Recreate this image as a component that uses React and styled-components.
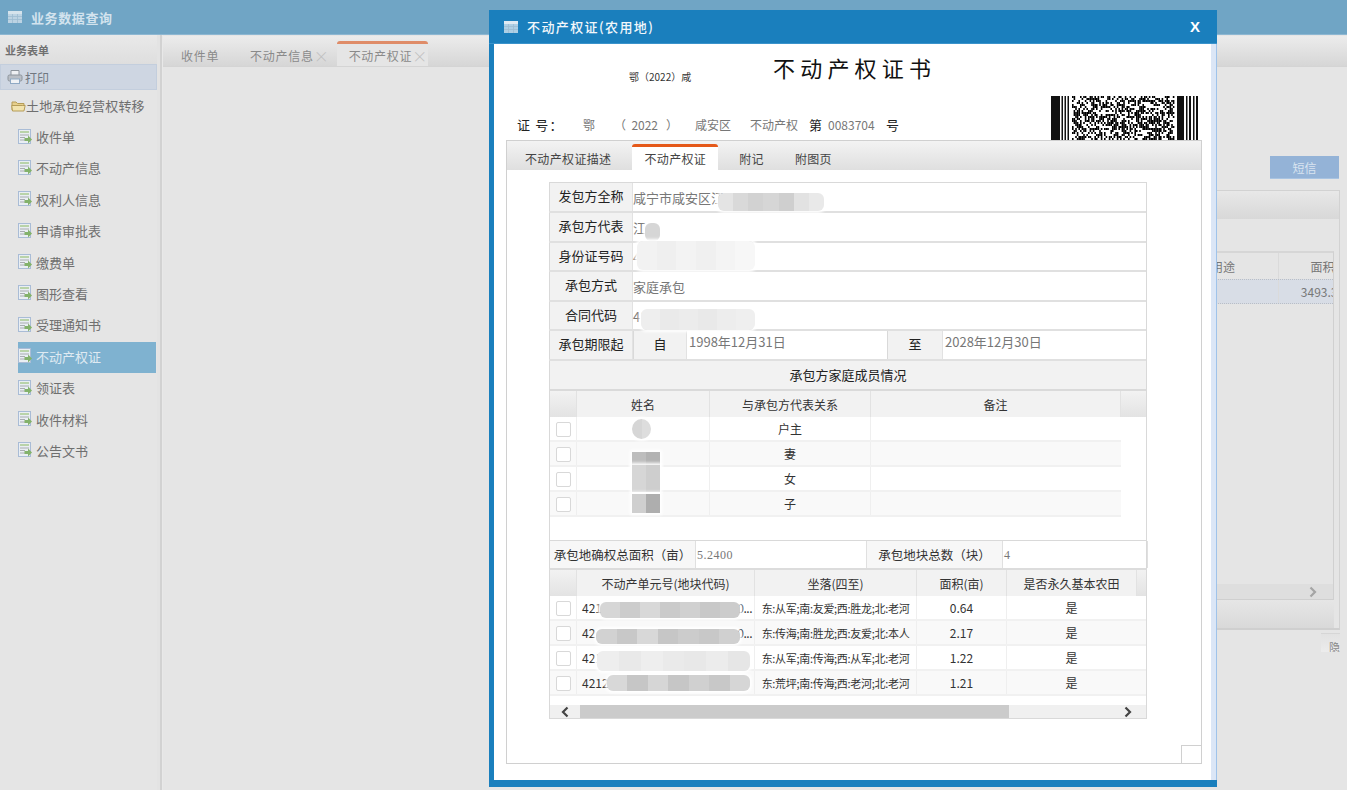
import React from "react";
import styled, { createGlobalStyle } from "styled-components";

const menuItems = [
  "收件单",
  "不动产信息",
  "权利人信息",
  "申请审批表",
  "缴费单",
  "图形查看",
  "受理通知书",
  "不动产权证",
  "领证表",
  "收件材料",
  "公告文书",
];

const members = ["户主", "妻", "女", "子"];

const parcels = [
  { code: "4212", tail: "0...", loc: "东:从军;南:友爱;西:胜龙;北:老河", area: "0.64" },
  { code: "42", tail: "0...", loc: "东:传海;南:胜龙;西:友爱;北:本人", area: "2.17" },
  { code: "421", tail: "", loc: "东:从军;南:传海;西:从军;北:老河", area: "1.22" },
  { code: "4212", tail: "", loc: "东:荒坪;南:传海;西:老河;北:老河", area: "1.21" },
];

const App = () => {
  return (
    <Page>
      <GlobalStyle />
      <TopBar>
        <TableIcon color="#d5e3ec" />
        <TopTitle>业务数据查询</TopTitle>
      </TopBar>
      <Main>
        <Sidebar>
          <SideHead>业务表单</SideHead>
          <PrintRow>
            <PrinterIcon />
            打印
          </PrintRow>
          <TreeRoot>
            <FolderIcon />
            土地承包经营权转移
          </TreeRoot>
          <MenuList>
            {menuItems.map((item) => (
              <MenuItem key={item} $active={item === "不动产权证"}>
                <FormIcon />
                {item}
              </MenuItem>
            ))}
          </MenuList>
        </Sidebar>
        <Splitter />
        <Content>
          <TabStrip>
            <PageTab>收件单</PageTab>
            <PageTab $closable>
              不动产信息<TabClose>×</TabClose>
            </PageTab>
            <PageTab $closable $active>
              不动产权证<TabClose>×</TabClose>
            </PageTab>
          </TabStrip>
          <ContentBody>
            <SmsButton>短信</SmsButton>
            <BackPanel>
              <BackPanelHead />
              <BackGrid>
                <BackHeadRow>
                  <BackCell $w="111px">用途</BackCell>
                  <BackCell $w="88px">面积</BackCell>
                </BackHeadRow>
                <BackDataRow>
                  <BackCell $w="111px" />
                  <BackCell $w="88px">3493.35</BackCell>
                </BackDataRow>
                <BackScroll>
                  <Chevron dir="right" color="#a5a5a5" />
                </BackScroll>
              </BackGrid>
              <BackPanelFoot />
            </BackPanel>
            <PagerButton>
              <PagerText>隐</PagerText>
            </PagerButton>
          </ContentBody>
        </Content>
      </Main>

      <ModalWindow>
        <ModalHeader>
          <TableIcon color="#dfeaf3" />
          <ModalTitle>不动产权证(农用地)</ModalTitle>
          <ModalClose>X</ModalClose>
        </ModalHeader>
        <ModalMain>
          <Sheet>
            <CertHead>
              <CertLeft>
                <CertTop>
                  <CertMark>鄂（2022）咸</CertMark>
                  <CertTitle>不动产权证书</CertTitle>
                </CertTop>
                <CertNumber>
                  <NumLabel $w="66px" $spaced>证 号：</NumLabel>
                  <NumValue $w="31px">鄂</NumValue>
                  <NumValue $w="81px">{"（  2022   ）"}</NumValue>
                  <NumValue $w="55px">咸安区</NumValue>
                  <NumValue $w="59px">不动产权</NumValue>
                  <NumLabel $w="19px">第</NumLabel>
                  <NumValue $w="58px">0083704</NumValue>
                  <NumLabel $w="20px">号</NumLabel>
                </CertNumber>
              </CertLeft>
              <Barcode />
            </CertHead>
            <Frame>
              <FrameTabs>
                <FrameTab>不动产权证描述</FrameTab>
                <FrameTab $active>不动产权证</FrameTab>
                <FrameTab>附记</FrameTab>
                <FrameTab>附图页</FrameTab>
              </FrameTabs>
              <FrameBody>
                <FormTable>
                  <FormRow $h="30px">
                    <FormLabel>发包方全称</FormLabel>
                    <FormValue $wide>
                      咸宁市咸安区江
                      <Mosaic $left="85px" $top="10px" $w="106px" $h="18px" shades={["e4", "d9", "d2", "d6", "cf", "e2", "e9"]} />
                    </FormValue>
                  </FormRow>
                  <FormRow $h="30px">
                    <FormLabel>承包方代表</FormLabel>
                    <FormValue $wide>
                      江
                      <Mosaic $left="12px" $top="10px" $w="15px" $h="18px" shades={["d6"]} />
                    </FormValue>
                  </FormRow>
                  <FormRow $h="29px">
                    <FormLabel>身份证号码</FormLabel>
                    <FormValue $wide>
                      4
                      <Mosaic $left="4px" $top="-2px" $w="118px" $h="29px" shades={["f2", "ef", "f3", "f0", "f4", "f7"]} />
                    </FormValue>
                  </FormRow>
                  <FormRow $h="30px">
                    <FormLabel>承包方式</FormLabel>
                    <FormValue $wide>家庭承包</FormValue>
                  </FormRow>
                  <FormRow $h="29px">
                    <FormLabel>合同代码</FormLabel>
                    <FormValue $wide>
                      41
                      <Mosaic $left="8px" $top="7px" $w="114px" $h="21px" shades={["ee", "ea", "ec", "e9", "ed", "ef"]} />
                    </FormValue>
                  </FormRow>
                  <FormRow $h="30px">
                    <FormLabel>承包期限起</FormLabel>
                    <FormLabel $w="54px">自</FormLabel>
                    <FormValue $w="200px" $top>1998年12月31日</FormValue>
                    <FormLabel $w="56px">至</FormLabel>
                    <FormValue $wide $top>2028年12月30日</FormValue>
                  </FormRow>
                  <FormTitle>承包方家庭成员情况</FormTitle>
                </FormTable>

                <GridBox $h="150px">
                  <GridHead>
                    <CheckHead />
                    <HeadCell $w="133px">姓名</HeadCell>
                    <HeadCell $w="161px">与承包方代表关系</HeadCell>
                    <HeadCell $w="250px">备注</HeadCell>
                    <HeadFill />
                  </GridHead>
                  {members.map((relation, i) => (
                    <GridRow key={relation} $odd={i % 2 === 1} $w="571px">
                      <CheckCell>
                        <CheckBox />
                      </CheckCell>
                      <DataCell $w="133px">
                        {i === 0 && <Mosaic $left="55px" $top="2px" $w="19px" $h="20px" $round shades={["d6", "dd"]} />}
                        {i === 1 && <Mosaic $left="55px" $top="10px" $w="28px" $h="18px" $square shades={["bd", "b2"]} />}
                        {i === 2 && <Mosaic $left="55px" $top="-2px" $w="28px" $h="27px" $square shades={["d6", "ce"]} />}
                        {i === 3 && <Mosaic $left="55px" $top="2px" $w="28px" $h="19px" $square shades={["cf", "ae"]} />}
                      </DataCell>
                      <DataCell $w="161px">{relation}</DataCell>
                      <DataCell $w="250px" />
                    </GridRow>
                  ))}
                </GridBox>

                <SummaryRow>
                  <SummaryLabel $w="146px">承包地确权总面积（亩）</SummaryLabel>
                  <SummaryValue $w="171px">5.2400</SummaryValue>
                  <SummaryLabel $w="136px">承包地块总数（块）</SummaryLabel>
                  <SummaryValue $w="145px">4</SummaryValue>
                </SummaryRow>

                <GridBox $h="149px">
                  <GridHead>
                    <CheckHead />
                    <HeadCell $w="178px">不动产单元号(地块代码)</HeadCell>
                    <HeadCell $w="162px">坐落(四至)</HeadCell>
                    <HeadCell $w="90px">面积(亩)</HeadCell>
                    <HeadCell $w="130px">是否永久基本农田</HeadCell>
                    <HeadFill />
                  </GridHead>
                  {parcels.map((p, i) => (
                    <GridRow key={p.loc} $odd={i % 2 === 1}>
                      <CheckCell>
                        <CheckBox />
                      </CheckCell>
                      <DataCell $w="178px" $left>
                        {p.code}
                        <CellTail>{p.tail}</CellTail>
                        {i === 0 && <Mosaic $left="23px" $top="6px" $w="140px" $h="16px" shades={["d6", "cc", "d8", "ca", "d0", "c8", "cc"]} />}
                        {i === 1 && <Mosaic $left="19px" $top="8px" $w="144px" $h="15px" shades={["d2", "c8", "d8", "c6", "cc", "c8", "d0"]} />}
                        {i === 2 && <Mosaic $left="20px" $top="5px" $w="153px" $h="20px" shades={["ee", "e9", "ee", "ea", "e8", "ec", "e6"]} />}
                        {i === 3 && <Mosaic $left="30px" $top="4px" $w="143px" $h="16px" shades={["d8", "c6", "d6", "c6", "d0", "c8", "d6"]} />}
                      </DataCell>
                      <DataCell $w="162px" $small>{p.loc}</DataCell>
                      <DataCell $w="90px">{p.area}</DataCell>
                      <DataCell $w="130px">是</DataCell>
                    </GridRow>
                  ))}
                  <ScrollBar>
                    <ScrollArrow>
                      <Chevron dir="left" color="#444" />
                    </ScrollArrow>
                    <ScrollThumb />
                    <ScrollArrow>
                      <Chevron dir="right" color="#444" />
                    </ScrollArrow>
                  </ScrollBar>
                </GridBox>
              </FrameBody>
              <CornerBox />
            </Frame>
          </Sheet>
          <PaleStrip />
        </ModalMain>
      </ModalWindow>
    </Page>
  );
};

const TableIcon = ({ color }) => (
  <IconSvg width="14" height="12" viewBox="0 0 14 12">
    <rect x="0" y="0" width="14" height="12" fill={color} fillOpacity="0.75" />
    <rect x="0" y="0" width="14" height="3" fill={color} />
    <path d="M0 5.5h14M0 8.5h14M4.5 3v9M9.5 3v9" stroke="#9dbdd2" strokeWidth="0.8" />
  </IconSvg>
);

const PrinterIcon = () => (
  <IconSvg width="16" height="16" viewBox="0 0 16 16">
    <path d="M4 6V1.5h8V6" fill="#eef0f3" stroke="#8d949c" />
    <rect x="1" y="6" width="14" height="6" rx="1.5" fill="#b9bec5" stroke="#8d949c" />
    <rect x="3.5" y="10" width="9" height="4.5" fill="#f0f2f5" stroke="#8fa9c4" />
  </IconSvg>
);

const FolderIcon = () => (
  <IconSvg width="15" height="13" viewBox="0 0 15 13">
    <path d="M1 11V3h4l1.5 1.5H13V11z" fill="#e6cf8c" stroke="#b59c58" />
    <path d="M0.7 6.5h10.5l3 0-1.3 5.5H1.5z" fill="#f2e3ae" stroke="#b59c58" />
  </IconSvg>
);

const FormIcon = () => (
  <IconSvg width="14" height="16" viewBox="0 0 14 16">
    <rect x="0.5" y="0.5" width="12" height="14" fill="#e9eef3" stroke="#a9bcd6" />
    <rect x="2" y="2" width="9" height="2" fill="#b9d3a9" />
    <path d="M2 6h9M2 8.5h5M2 11h5" stroke="#a8acb0" />
    <path d="M6.5 9h3.5V6.5l4 4-4 4V12H6.5z" fill="#83b26b" />
  </IconSvg>
);

const Chevron = ({ dir, color }) => (
  <svg width="10" height="12" viewBox="0 0 10 12">
    <path
      d={dir === "left" ? "M7.5 1.5 3 6l4.5 4.5" : "M2.5 1.5 7 6l-4.5 4.5"}
      fill="none"
      stroke={color}
      strokeWidth="2.2"
    />
  </svg>
);

// 条码是随机铺出来的,只要看着像 PDF417
const Barcode = () => {
  const bars = [];
  let seed = 7;
  const next = () => {
    seed = (seed * 9301 + 49297) % 233280;
    return seed / 233280;
  };
  for (let row = 0; row < 22; row++) {
    for (let col = 0; col < 64; col++) {
      if (next() > 0.47) {
        bars.push(<rect key={`${row}-${col}`} x={21 + col * 1.6} y={row * 2} width="1.6" height="2" fill="#000" />);
      }
    }
  }
  return (
    <BarcodeSvg width="147" height="44" viewBox="0 0 147 44">
      <path d="M0 0h9v44H0zM10.5 0h1.5v44h-1.5zM13.5 0h1.5v44h-1.5zM16.5 0h1.5v44h-1.5z" fill="#111" />
      {bars}
      <path d="M126 0h7v44h-7zM135 0h1.5v44H135zM138 0h2v44h-2zM142 0h1.5v44H142zM145 0h2v44h-2z" fill="#111" />
    </BarcodeSvg>
  );
};

const Mosaic = ({ shades, ...rest }) => (
  <MosaicBox {...rest}>
    {shades.map((s, i) => (
      <MosaicCell key={i} style={{ background: `#${s}${s}${s}` }} />
    ))}
  </MosaicBox>
);

const GlobalStyle = createGlobalStyle`
  html, body {
    margin: 0;
    padding: 0;
    height: 100%;
    overflow: hidden;
    background: #e5e5e5;
    font-family: "Noto Sans CJK SC", "Liberation Sans", sans-serif;
  }
  * {
    box-sizing: border-box;
  }
`;

const Page = styled.div`
  position: relative;
  height: 790px;
  display: flex;
  flex-direction: column;
  overflow: hidden;
`;

const IconSvg = styled.svg`
  flex: none;
`;

const TopBar = styled.div`
  height: 35px;
  flex: none;
  display: flex;
  align-items: center;
  padding-left: 8px;
  background: #70a5c5;
  border-bottom: 1px solid #8db7d2;
`;

const TopTitle = styled.div`
  margin-left: 9px;
  font-size: 13px;
  font-weight: 700;
  letter-spacing: 0.6px;
  color: #d3e3ee;
`;

const Main = styled.div`
  flex: 1;
  display: flex;
  min-height: 0;
`;

const Sidebar = styled.div`
  width: 157px;
  flex: none;
  color: #6f6f6f;
  font-size: 13px;
`;

const SideHead = styled.div`
  height: 29px;
  padding-left: 5px;
  display: flex;
  align-items: center;
  font-size: 11px;
  font-weight: 700;
  color: #707070;
  background: linear-gradient(#e9e9e9, #dedede);
`;

const PrintRow = styled.div`
  height: 26px;
  display: flex;
  align-items: center;
  gap: 2px;
  padding-left: 6px;
  font-size: 12px;
  color: #707780;
  background: #ced6e2;
  border: 1px solid #c3cedd;
`;

const TreeRoot = styled.div`
  height: 31px;
  display: flex;
  align-items: center;
  padding-left: 11px;
  padding-bottom: 1px;
  font-size: 13px;
  letter-spacing: 0.2px;
`;

const MenuList = styled.div`
  display: flex;
  flex-direction: column;
  gap: 0.4px;
  padding-top: 1px;
  padding-left: 18px;
  padding-right: 1px;
`;

const MenuItem = styled.div`
  height: 31px;
  display: flex;
  align-items: center;
  gap: 4px;
  padding-bottom: 2px;
  font-size: 13px;
  color: ${(p) => (p.$active ? "#dfeaf2" : "#6f6f6f")};
  background: ${(p) => (p.$active ? "#7fb2d0" : "transparent")};
`;

const Splitter = styled.div`
  width: 6px;
  flex: none;
  background: linear-gradient(90deg, #e3e3e3 0 3px, #d2d2d2 3px 5px, #e8e8e8 5px);
`;

const Content = styled.div`
  flex: 1;
  min-width: 0;
  display: flex;
  flex-direction: column;
`;

const TabStrip = styled.div`
  height: 31px;
  flex: none;
  margin-top: 1px;
  display: flex;
  align-items: flex-end;
  gap: 7px;
  padding-left: 6px;
  background: linear-gradient(#ececec, #d6d6d6);
  border-bottom: 1px solid #d4d4d4;
`;

const PageTab = styled.div`
  height: 25px;
  padding: 0 ${(p) => (p.$closable ? "4px" : "12px")} 0 12px;
  display: flex;
  align-items: center;
  font-size: 12px;
  letter-spacing: 0.7px;
  color: #8a8a8a;
  background: ${(p) => (p.$active ? "#e5e5e5" : "transparent")};
  border-top: 3px solid ${(p) => (p.$active ? "#df8c68" : "transparent")};
  border-radius: 3px 3px 0 0;
`;

const TabClose = styled.span`
  width: 12px;
  text-align: center;
  font-size: 15px;
  font-weight: 300;
  letter-spacing: 0;
  line-height: 1;
  color: #bdbdbd;
`;

const ContentBody = styled.div`
  flex: 1;
  min-height: 0;
  display: flex;
  flex-direction: column;
  align-items: flex-end;
  padding-top: 89px;
  padding-right: 7px;
  background: #e5e5e5;
`;

const SmsButton = styled.div`
  width: 69px;
  height: 23px;
  margin-right: 1px;
  display: flex;
  align-items: center;
  justify-content: center;
  font-size: 12px;
  color: #d9e4f0;
  background: #94b3d7;
  border-bottom: 1px solid #a9c4e2;
`;

const BackPanel = styled.div`
  width: 400px;
  height: 440px;
  margin-top: 11px;
  display: flex;
  flex-direction: column;
  border: 1px solid #d2d2d2;
  border-bottom: 2px solid #cfcfcf;
`;

const BackPanelHead = styled.div`
  height: 28px;
  flex: none;
  background: linear-gradient(#e8e8e8, #d8d8d8);
`;

const BackGrid = styled.div`
  flex: 1;
  margin: 32px 5px 0 0;
  display: flex;
  flex-direction: column;
  border-top: 2px solid #d6d6d6;
  border-right: 1px solid #d0d0d0;
`;

const BackHeadRow = styled.div`
  height: 26px;
  flex: none;
  display: flex;
  overflow: hidden;
  padding-left: 227px;
  font-size: 12px;
  color: #777;
`;

const BackDataRow = styled(BackHeadRow)`
  height: 25px;
  background: #d8dde6;
  border-top: 1px dotted #b9bec6;
  border-bottom: 1px dotted #b9bec6;
`;

const BackCell = styled.div`
  width: ${(p) => p.$w};
  flex: none;
  display: flex;
  align-items: center;
  justify-content: center;
  white-space: nowrap;
  border-right: 1px solid #dadada;
`;

const BackScroll = styled.div`
  height: 16px;
  margin-top: auto;
  display: flex;
  align-items: center;
  justify-content: flex-end;
  padding-right: 15px;
  background: #dedede;
  border-bottom: 1px solid #cfcfcf;
`;

const BackPanelFoot = styled.div`
  height: 28px;
  flex: none;
  margin-right: 5px;
  background: linear-gradient(#e6e6e6, #d9d9d9);
`;

const PagerButton = styled.div`
  width: 19px;
  height: 19px;
  margin-top: 3px;
  overflow: hidden;
  display: flex;
  justify-content: flex-end;
  align-items: flex-start;
  background: linear-gradient(#e2e2e2, #ececec);
  border-top: 1px solid #d6d6d6;
`;

const PagerText = styled.div`
  font-size: 11px;
  line-height: 11px;
  margin-top: 8px;
  flex: none;
  color: #888;
`;

const ModalWindow = styled.div`
  position: absolute;
  left: 489px;
  top: 10px;
  width: 728px;
  height: 777px;
  display: flex;
  flex-direction: column;
`;

const ModalHeader = styled.div`
  height: 34px;
  flex: none;
  display: flex;
  align-items: center;
  padding: 0 17px 0 15px;
  background: #1a7fbd;
  border-bottom: 1px solid #3a93cb;
`;

const ModalTitle = styled.div`
  margin-left: 9px;
  font-size: 13px;
  font-weight: 500;
  letter-spacing: 1.4px;
  color: #f2f7fb;
`;

const ModalClose = styled.div`
  margin-left: auto;
  font-family: "Liberation Sans", sans-serif;
  font-size: 15px;
  font-weight: 700;
  color: #fff;
`;

const ModalMain = styled.div`
  flex: 1;
  min-height: 0;
  display: flex;
  border-left: 5px solid #1a7fbd;
  border-bottom: 7px solid #1a7fbd;
`;

const Sheet = styled.div`
  flex: 1;
  min-width: 0;
  display: flex;
  flex-direction: column;
  padding: 0 9px 16px 12px;
  background: #fff;
`;

const PaleStrip = styled.div`
  width: 6px;
  flex: none;
  background: #dbe6f6;
  border-right: 1px solid #9fc3ea;
`;

const CertHead = styled.div`
  height: 96px;
  flex: none;
  display: flex;
  justify-content: space-between;
  align-items: flex-end;
`;

const CertLeft = styled.div`
  flex: 1;
  align-self: stretch;
  display: flex;
  flex-direction: column;
  justify-content: space-between;
`;

const CertTop = styled.div`
  display: flex;
  align-items: flex-end;
  padding: 7px 0 0 123px;
`;

const CertMark = styled.div`
  width: 144px;
  font-size: 10px;
  line-height: 14px;
  margin-bottom: -1px;
  color: #333;
`;

const CertTitle = styled.div`
  font-size: 22px;
  line-height: 32px;
  letter-spacing: 5.2px;
  color: #111;
`;

const CertNumber = styled.div`
  display: flex;
  align-items: center;
  height: 20px;
  margin-bottom: 6px;
  padding-left: 11px;
  font-size: 13px;
`;

const NumLabel = styled.div`
  width: ${(p) => p.$w};
  flex: none;
  color: #222;
  white-space: nowrap;
  letter-spacing: ${(p) => (p.$spaced ? "1.2px" : "0")};
`;

const NumValue = styled.div`
  width: ${(p) => p.$w};
  flex: none;
  color: #777;
  font-size: 12px;
  white-space: pre;
  overflow: visible;
`;

const BarcodeSvg = styled.svg`
  flex: none;
  margin-right: 4px;
`;

const Frame = styled.div`
  position: relative;
  flex: 1;
  min-height: 0;
  display: flex;
  flex-direction: column;
  border: 1px solid #d0d0d0;
`;

const FrameTabs = styled.div`
  height: 29px;
  flex: none;
  display: flex;
  align-items: flex-end;
  padding-left: 6px;
  background: linear-gradient(#f3f3f3, #dfdfdf);
`;

const FrameTab = styled.div`
  height: 26px;
  padding: 0 12px;
  margin-right: 9px;
  display: flex;
  align-items: center;
  font-size: 12px;
  letter-spacing: 0.35px;
  color: #444;
  background: ${(p) => (p.$active ? "#fff" : "transparent")};
  border-top: 3px solid ${(p) => (p.$active ? "#e5591a" : "transparent")};
  border-radius: 3px 3px 0 0;
  &:nth-child(3) {
    margin-right: 7px;
  }
`;

const FrameBody = styled.div`
  flex: 1;
  min-height: 0;
  padding: 12px 0 0 42px;
  display: flex;
  flex-direction: column;
`;

const CornerBox = styled.div`
  position: absolute;
  right: 0;
  bottom: 0;
  width: 20px;
  height: 18px;
  background: #fff;
  border-left: 1px solid #d0d0d0;
  border-top: 1px solid #d0d0d0;
`;

const FormTable = styled.div`
  width: 598px;
  flex: none;
  border-top: 1px solid #d9d9d9;
  border-right: 1px solid #d9d9d9;
`;

const FormRow = styled.div`
  height: ${(p) => p.$h};
  display: flex;
  border-bottom: 2px solid #e0e0e0;
`;

const FormLabel = styled.div`
  width: ${(p) => p.$w || "84px"};
  flex: none;
  display: flex;
  align-items: center;
  justify-content: center;
  padding-bottom: 3px;
  font-size: 13px;
  color: #222;
  background: #f2f2f2;
  border-left: 1px solid #d9d9d9;
  border-right: 1px solid #e2e2e2;
`;

const FormValue = styled.div`
  position: relative;
  ${(p) => (p.$wide ? "flex: 1;" : `width: ${p.$w}; flex: none;`)}
  display: flex;
  align-items: ${(p) => (p.$top ? "flex-start" : "center")};
  padding-top: 1px;
  padding-left: ${(p) => (p.$top ? "2px" : "0")};
  font-size: 13px;
  color: #777;
`;

const FormTitle = styled.div`
  height: 30px;
  display: flex;
  align-items: center;
  justify-content: center;
  padding-bottom: 2px;
  font-size: 13px;
  color: #222;
  background: #f2f2f2;
  border-left: 1px solid #d9d9d9;
  border-bottom: 2px solid #dadada;
`;

const GridBox = styled.div`
  position: relative;
  width: 598px;
  height: ${(p) => p.$h};
  flex: none;
  overflow: hidden;
  border-left: 1px solid #d9d9d9;
  border-right: 1px solid #d9d9d9;
  border-bottom: 1px solid #d9d9d9;
`;

const GridHead = styled.div`
  height: 26px;
  display: flex;
  font-size: 12px;
  color: #333;
`;

const CheckHead = styled.div`
  width: 26px;
  flex: none;
  background: linear-gradient(#f2f2f2, #e3e3e3);
`;

const HeadCell = styled.div`
  width: ${(p) => p.$w};
  flex: none;
  display: flex;
  align-items: center;
  justify-content: center;
  background: #f2f2f2;
  border-left: 1px solid #e2e2e2;
`;

const HeadFill = styled.div`
  flex: 1;
  background: linear-gradient(#f2f2f2, #e3e3e3);
  border-left: 1px solid #e2e2e2;
`;

const GridRow = styled.div`
  height: 25px;
  width: ${(p) => p.$w || "auto"};
  display: flex;
  background: ${(p) => (p.$odd ? "#f9f9f9" : "#fff")};
  border-bottom: 2px solid #f1f1f1;
`;

const CheckCell = styled.div`
  width: 26px;
  flex: none;
  display: flex;
  align-items: center;
  justify-content: center;
  padding-top: 2px;
`;

const CheckBox = styled.div`
  width: 15px;
  height: 15px;
  background: #fff;
  border: 1px solid #d8d8d8;
  border-radius: 2px;
`;

const DataCell = styled.div`
  position: relative;
  width: ${(p) => p.$w};
  flex: none;
  display: flex;
  align-items: center;
  justify-content: ${(p) => (p.$left ? "flex-start" : "center")};
  padding-left: ${(p) => (p.$left ? "5px" : "0")};
  font-size: ${(p) => (p.$small ? "11px" : "12px")};
  letter-spacing: ${(p) => (p.$small ? "-0.3px" : "0")};
  white-space: nowrap;
  overflow: ${(p) => (p.$small ? "hidden" : "visible")};
  color: #333;
  border-left: 1px solid #efefef;
`;

const CellTail = styled.span`
  margin-left: auto;
  padding-right: 2px;
  letter-spacing: -0.5px;
`;

const MosaicBox = styled.div`
  position: absolute;
  left: ${(p) => p.$left};
  top: ${(p) => p.$top};
  width: ${(p) => p.$w};
  height: ${(p) => p.$h};
  display: flex;
  overflow: hidden;
  border-radius: ${(p) => (p.$round ? "50%" : p.$square ? "0" : "6px")};
  box-shadow: 0 0 3px 2px #fff;
  z-index: 1;
`;

const MosaicCell = styled.div`
  flex: 1;
`;

const SummaryRow = styled.div`
  width: 598px;
  height: 30px;
  flex: none;
  display: flex;
  border-left: 1px solid #d9d9d9;
  border-right: 1px solid #d9d9d9;
  border-bottom: 2px solid #dcdcdc;
  margin-top: -1px;
  border-top: 1px solid #dcdcdc;
`;

const SummaryLabel = styled.div`
  width: ${(p) => p.$w};
  flex: none;
  display: flex;
  align-items: center;
  justify-content: center;
  white-space: nowrap;
  font-size: 12.5px;
  color: #333;
  background: #f7f7f7;
  border-right: 1px solid #e0e0e0;
`;

const SummaryValue = styled.div`
  width: ${(p) => p.$w};
  flex: none;
  display: flex;
  align-items: center;
  padding: 2px 0 0 1px;
  font-family: "Liberation Serif", serif;
  font-size: 12px;
  letter-spacing: 0.5px;
  color: #777;
  border-right: 1px solid #e0e0e0;
`;

const ScrollBar = styled.div`
  position: absolute;
  left: 0;
  right: 0;
  bottom: 0;
  height: 13px;
  display: flex;
  background: #f0f0f0;
`;

const ScrollArrow = styled.div`
  width: 30px;
  flex: none;
  display: flex;
  align-items: center;
  justify-content: center;
  &:last-child {
    flex: 1;
    justify-content: flex-end;
    padding-right: 13px;
  }
`;

const ScrollThumb = styled.div`
  width: 429px;
  flex: none;
  background: #cbcbcb;
`;

export default App;
